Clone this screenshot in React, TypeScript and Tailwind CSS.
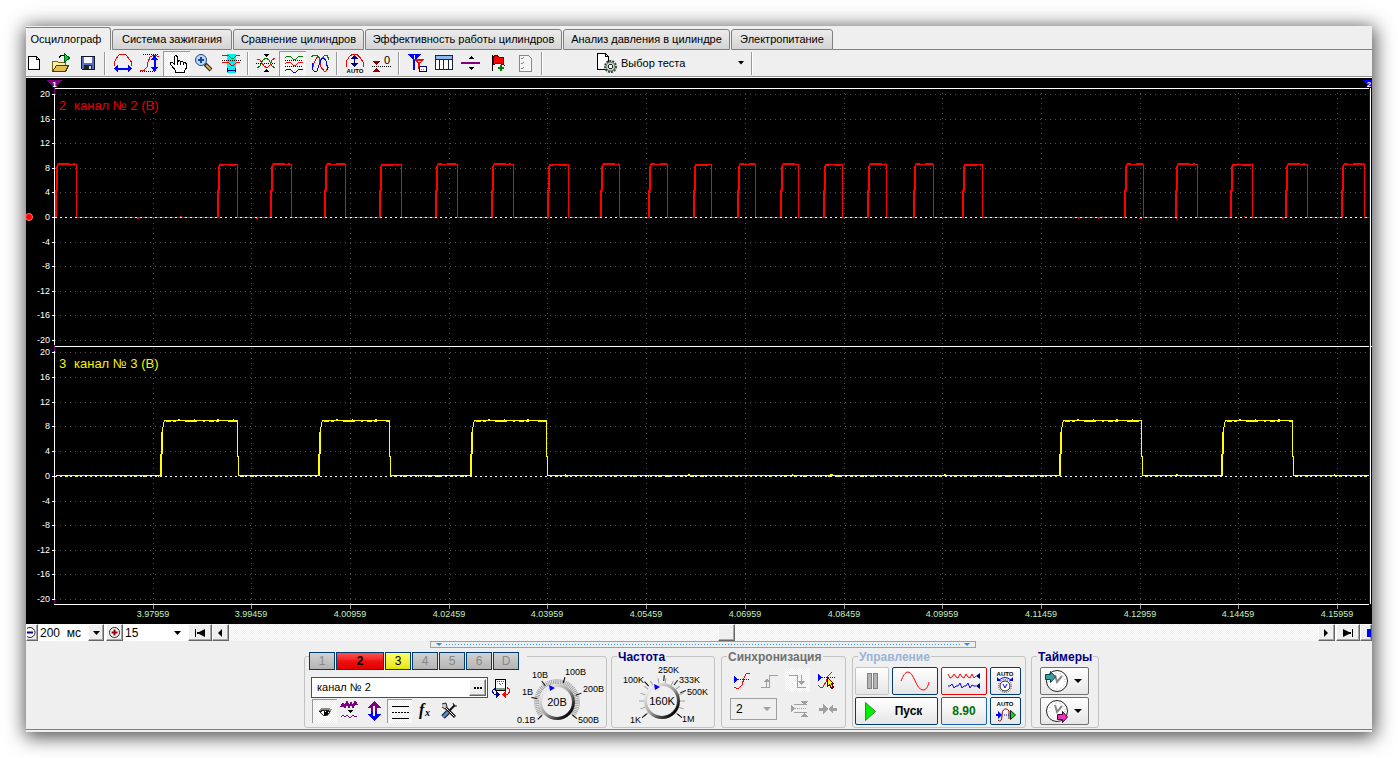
import type { ReactNode } from "react";
import clsx from "clsx";

const FONT = "font-['Liberation_Sans',Arial,sans-serif]";
const HATCH = "bg-[repeating-conic-gradient(#ffffff_0_25%,#efefef_0_50%)] bg-[length:2px_2px]";
const BEVEL = "bg-[#efefef] border border-t-white border-l-white border-r-[#666] border-b-[#666] shadow-[inset_-1px_-1px_0_#a8a8a8]";

const TABS = [
  { label: "Осциллограф", width: "w-[85px]" },
  { label: "Система зажигания", width: "w-[120px]" },
  { label: "Сравнение цилиндров", width: "w-[131px]" },
  { label: "Эффективность работы цилиндров", width: "w-[197px]" },
  { label: "Анализ давления в цилиндре", width: "w-[167px]" },
  { label: "Электропитание", width: "w-[102px]" },
];

/* ---------- Chart ---------- */

const LEVELS = [20, 16, 12, 8, 4, 0, -4, -8, -12, -16, -20];
const ROWS_A = [16, 41, 65, 90, 114, 139, 164, 188, 213, 237, 262];
const ROWS_B = [274, 299, 324, 348, 373, 398, 423, 447, 472, 496, 521];
const TIMES = [
  { x: 127, t: "3.97959" }, { x: 225, t: "3.99459" }, { x: 324, t: "4.00959" }, { x: 423, t: "4.02459" },
  { x: 521, t: "4.03959" }, { x: 620, t: "4.05459" }, { x: 719, t: "4.06959" }, { x: 818, t: "4.08459" },
  { x: 916, t: "4.09959" }, { x: 1015, t: "4.11459" }, { x: 1114, t: "4.12959" }, { x: 1212, t: "4.14459" },
  { x: 1311, t: "4.15959" },
];

const RED: [number, number][] = [
  [31, 50], [193, 211], [246, 265], [300, 319], [355, 375], [411, 431], [467, 487], [523, 542], [576, 593],
  [624, 641], [669, 685], [713, 729], [756, 772], [799, 816], [843, 860], [889, 907], [938, 956],
  [1100, 1117], [1151, 1171], [1206, 1226], [1261, 1281], [1317, 1338],
];
const YELLOW: [number, number][] = [[134, 211], [292, 363], [444, 520], [1033, 1115], [1195, 1266]];

const redPath = "M29.5 139.5" + RED.map(([a, b]) => `H${a - 0.5}V112.5H${a + 0.5}V86.5H${b + 0.5}V139.5`).join("") + "H1343";

const yellowPath = "M29.5 397.5" + YELLOW.map(([a, b]) =>
  `H${a + 0.5}V391L${a + 1.5} 375L${a + 2.5} 353L${a + 3.5} 346L${a + 4.5} 342.5H${b + 0.5}V378.5H${b + 1.5}V397.5`).join("") + "H1343";

function Scope() {
  return (
    <svg viewBox="0 0 1346 546" className={`block w-full bg-black ${FONT}`} shapeRendering="crispEdges" role="img" aria-label="Осциллограмма">
      {/* Grid */}
      <g stroke="#505050" strokeDasharray="1 4">
        {[...ROWS_A, ...ROWS_B].map((y) => <line key={y} x1="29" x2="1343" y1={y + 0.5} y2={y + 0.5} />)}
        {TIMES.map(({ x }) => <line key={x} x1={x + 0.5} x2={x + 0.5} y1="15" y2="526" />)}
      </g>

      {/* Signals */}
      <path d={redPath} fill="none" stroke="#f00" />
      {RED.map(([a, b], i) => (
        <g key={a} stroke="#f00">
          <path d={`M${a - 1} 139V112M${a} 112V88`} strokeWidth="2" />
          <path d={i % 3 === 1 ? `M${a + 1} 87.5H${b - 1}` : `M${a + 1} 85.5H${b}`} strokeDasharray={i % 2 ? "4 5 9 1" : "12 3 2 2"} />
        </g>
      ))}
      <path d={yellowPath} fill="none" stroke="#ff0" />
      {YELLOW.map(([a, b]) => (
        <g key={a} stroke="#ff0">
          <path d={`M${a + 1} 398V376M${a + 2} 376V354`} strokeWidth="2" />
          <path d={`M${a + 6} 343.5H${b}`} strokeDasharray="5 2 3 9 12 6 2 4" />
          <path d={`M${a + 18} 341.5H${b - 3}`} strokeDasharray="2 14 1 22" />
        </g>
      ))}
      <path d="M29 139.5H1343M29 398.5H1343" stroke="#fff" strokeDasharray="2 3" />
      <path d="M40 398.5H134M216 398.5H292M368 398.5H444M530 398.5H1033M1120 398.5H1195M1270 398.5H1343" stroke="#ff0" strokeDasharray="2 7 3 12 1 9" />
      <path d="M539 396.5h1M662 396.5h2M766 396.5h1M804 396.5h3M918 396.5h2M1150 396.5h2M1308 396.5h1" stroke="#ff0" />
      <path d="M111 140.5h2M154 138.5h2M230 140.5h2M285 140.5h1M1052 140.5h1M1072 140.5h1M1113 140.5h3M1150 140.5h1M1218 138.5h1M1256 140.5h1" stroke="#f00" />

      {/* Frame */}
      <path d="M28 10.5H1344M28.5 10V526M28 268.5H1346M28 526.5H1343M1344.5 10V526" stroke="#fff" fill="none" />
      <path d="M1343.5 9V526" stroke="#00f" />
      <path d="M28.5 8V16M28.5 267V273M28.5 521V526" stroke="#800080" />
      {[...ROWS_A, ...ROWS_B].map((y) => <line key={y} x1="26" x2="29" y1={y + 0.5} y2={y + 0.5} stroke="#fff" />)}
      {TIMES.map(({ x }) => <line key={x} x1={x + 0.5} x2={x + 0.5} y1="527" y2="531" stroke="#999" />)}

      {/* Cursors */}
      <path d="M21 2H36L28.5 10Z" fill="#800080" />
      <path d="M1336 2H1346V9H1343Z" fill="#00f" />
      <text x="28.5" y="9" fontSize="8" fontWeight="bold" fill="#fff" textAnchor="middle">1</text>
      <text x="1343" y="9" fontSize="8" fontWeight="bold" fill="#fff" textAnchor="middle">2</text>
      <circle cx="3" cy="139" r="3.5" fill="#f00" stroke="#f77" shapeRendering="geometricPrecision" />

      {/* Labels */}
      <g fontSize="9" fill="#fff" textAnchor="end">
        {LEVELS.map((v, i) => <text key={v} x="24" y={ROWS_A[i] + 3}>{v}</text>)}
        {LEVELS.map((v, i) => <text key={v} x="24" y={ROWS_B[i] + 3}>{v}</text>)}
      </g>
      <g fontSize="9" fill="#c4f0bc" textAnchor="middle">
        {TIMES.map(({ x, t }) => <text key={t} x={x} y="539">{t}</text>)}
      </g>
      <g fontSize="13">
        <text x="33" y="32" fill="#e80000">2</text>
        <text x="48" y="32" fill="#e80000">канал № 2 (В)</text>
        <text x="33" y="290" fill="#f4f400">3</text>
        <text x="48" y="290" fill="#f4f400">канал № 3 (В)</text>
      </g>
    </svg>
  );
}

/* ---------- Toolbar ---------- */

function Tool({ label, pressed, className = "w-[27px]", children }: { label: string; pressed?: boolean; className?: string; children: ReactNode }) {
  return (
    <button
      type="button"
      aria-label={label}
      className={clsx("h-[25px] shrink-0 overflow-hidden", className, pressed && `${HATCH} shadow-[inset_1px_1px_0_#999]`)}
    >
      <svg width="27" height="25" viewBox="0 0 27 25" fill="none" shapeRendering="crispEdges" className={`block ${FONT}`}>{children}</svg>
    </button>
  );
}

function Sep() {
  return <div className="flex w-2 shrink-0 justify-center"><div className="h-[23px] w-[2px] border-l border-r border-l-[#999] border-r-white" /></div>;
}

const WAVE_TOP = "M6 7L8 5H11L14 8H17L20 5H23L24 6";

function Toolbar() {
  return (
    <div className="flex h-[27px] items-center border-b border-[#909090]">
      <Tool label="Новый" className="w-[21px]">
        <path d="M2.5 5.5H10.5L13.5 8.5V18.5H2.5Z" fill="#fff" stroke="#000" />
        <path d="M10.5 5.5V8.5H13.5" stroke="#000" />
      </Tool>
      <Tool label="Открыть">
        <path d="M5.5 20.5V10.5H10.5L11.5 11.5H18.5V14.5" fill="#f7efa5" stroke="#7a6410" />
        <path d="M5.5 20.5L9.5 14.5H21.5L18.5 20.5Z" fill="#e2bf4e" stroke="#4a3c08" />
        <path d="M12 6.5L14 4.5H17" stroke="#000" />
        <path d="M17.5 2.5L22.5 7L17.5 11.5Z" fill="#00d030" stroke="#006018" />
      </Tool>
      <Tool label="Сохранить">
        <path d="M7.5 5.5H20.5V18.5H8.5L7.5 17.5Z" fill="#5a6cc0" stroke="#10142c" />
        <path d="M10 6H18V12H10Z" fill="#f4f6ff" />
        <path d="M10 14H18V18H10Z" fill="#222" />
        <path d="M15 15H17V18H15Z" fill="#ddd" />
      </Tool>
      <Sep />
      <Tool label="Масштаб по времени">
        <path d="M5.5 15V11L7.5 7L10.5 3.5H16.5L19.5 7L22.5 11V15" stroke="#f00" />
        <path d="M6 17.5H22" stroke="#00f" strokeWidth="2" />
        <path d="M5 17.5L9 13.5V21.5ZM23 17.5L19 13.5V21.5Z" fill="#00f" />
      </Tool>
      <Tool label="Масштаб по амплитуде">
        <path d="M7 3.5H22M4 20.5H18" stroke="#000" strokeDasharray="1 1" />
        <path d="M4 19.5H8L11 16L12 11L14 6L17 4.5H20L23 6" stroke="#f00" />
        <path d="M18.5 6V19" stroke="#00f" strokeWidth="2" />
        <path d="M18.5 4L22 9H15ZM18.5 21L22 16H15Z" fill="#00f" />
      </Tool>
      <Tool label="Рука" pressed>
        <path d="M12.5 21.5V19.5L10.5 17L7.5 13.5V11.5H9.5L11.5 13.5V5.5L12.5 4.5L14.5 5.5V10.5L16.5 9.5L17.5 11L19.5 10.5L20.5 12L22.5 11.5L23.5 13.5V17L21.5 19.5V21.5Z" fill="#fff" stroke="#000" />
        <path d="M14.5 10V14M17.5 11V14M20.5 12V14" stroke="#000" />
      </Tool>
      <Tool label="Лупа">
        <g shapeRendering="geometricPrecision">
          <path d="M15 13L21 19" stroke="#222" strokeWidth="4" />
          <path d="M16 14L20.5 18.500" stroke="#d8b048" strokeWidth="2" />
          <circle cx="11" cy="9" r="5.5" fill="#b9dcf5" stroke="#26438c" strokeWidth="1" />
        </g>
        <path d="M11 6V12M8 9H14" stroke="#1644a8" strokeWidth="2" />
      </Tool>
      <Tool label="Измерение">
        <path d="M10 3H19V22H10Z" fill="#00f0f0" />
        <path d="M5 5L8 4H11L14 7H17L20 4H23" stroke="#008000" />
        <path d="M5 9.5H24" stroke="#000" strokeDasharray="1 1" />
        <path d="M5 12L8 11H11L14 14H17L20 11H23" stroke="#f00" />
        <path d="M10.5 17V21M18.5 17V21M11 19.5H18" stroke="#000080" />
      </Tool>
      <Sep />
      <Tool label="Наложить сигналы">
        <path d="M4 12.5H23" stroke="#000" strokeDasharray="1 1" />
        <path d="M5 8L8 9L12 15L15 17L18 14L20 9L23 7" stroke="#f00" />
        <path d="M5 17L8 15L11 9L14 7L17 9L20 15L23 17" stroke="#008000" />
        <path d="M11 3H17L14 6ZM11 21H17L14 18Z" fill="#000" />
      </Tool>
      <Tool label="Развести сигналы" pressed>
        <path d={WAVE_TOP} stroke="#008000" />
        <path d="M6 9.5H24M6 15.5H24" stroke="#000" strokeDasharray="1 1" />
        <path d={WAVE_TOP} transform="translate(0 6)" stroke="#f00" />
        <path d={WAVE_TOP} transform="translate(0 13)" stroke="#00f" />
      </Tool>
      <Tool label="Совместить">
        <path d="M5 6L8 4H11L14 8H16L19 4H21L23 9" stroke="#008000" />
        <path d="M6 19L8 12L11 6L13 7L15 16L18 20H20L23 16" stroke="#f00" />
        <path d="M6 12V18L8 20H11L13 14L16 7H18L20 10L22 19" stroke="#00f" />
      </Tool>
      <Sep />
      <Tool label="Автомасштаб">
        <path d="M5.5 16V10L8.5 5.5L11 3.5H16L19.5 7L22.5 12V16" stroke="#f00" />
        <path d="M13.5 6V14" stroke="#000080" />
        <path d="M13.5 4L17 8H10ZM13.5 16L17 12H10Z" fill="#000080" />
        <text x="14" y="22" fontSize="6" fontWeight="bold" fill="#000" textAnchor="middle">AUTO</text>
      </Tool>
      <Tool label="Обнулить">
        <path d="M5 10H12L8.5 14ZM5 21H12L8.5 17Z" fill="#800000" />
        <path d="M4 15.5H23" stroke="#000" strokeDasharray="1 1" />
        <text x="16" y="13" fontSize="11" fill="#000">0</text>
      </Tool>
      <Sep />
      <Tool label="Маркеры">
        <path d="M5 3H18L12 9V19H10V9Z" fill="#00f" />
        <path d="M11 8H21L17 13V18H15V13Z" fill="#f00" />
        <path d="M11.5 4V8M15 10.5H18" stroke="#fff" />
        <rect x="16.5" y="15.5" width="7" height="5" fill="#fff" stroke="#000080" />
        <path d="M18 18.5H22" stroke="#808080" strokeDasharray="1 1" />
      </Tool>
      <Tool label="Таблица">
        <rect x="5.5" y="4.5" width="17" height="14" fill="#fff" stroke="#1a2440" />
        <path d="M6 5H22V8H6Z" fill="#8fb8f0" />
        <path d="M5 8.5H22M9.5 8V18M13.5 8V18M18.5 8V18" stroke="#1a2440" />
      </Tool>
      <Tool label="Разделитель">
        <path d="M4 12H23" stroke="#800080" strokeWidth="2" />
        <path d="M11 8H17L14 5ZM11 16H17L14 19Z" fill="#000" />
      </Tool>
      <Tool label="Добавить флаг">
        <path d="M8.5 4V20" stroke="#000" />
        <path d="M9 6L12 4L15 6H19L20 14L17 13L13 12L9 14Z" fill="#f00" stroke="#600" />
        <path d="M17 14V20M14 17H20" stroke="#008000" strokeWidth="2" />
      </Tool>
      <Tool label="Отчёт">
        <path d="M8.5 4.5H17.5L20.5 7.5V20.5H8.5Z" fill="#f4f4f4" stroke="#888" />
        <path d="M10 7L11 8L13 6M10 12L11 13L13 11M10 17L11 18L13 16" stroke="#888" />
      </Tool>
      <Sep />
      <button type="button" className="ml-11 flex h-[25px] w-[158px] items-center text-[11px]">
        <svg width="31" height="25" viewBox="0 0 31 25" fill="none" shapeRendering="crispEdges">
          <path d="M7.5 2.5H15.5L18.5 5.5V18.5H7.5Z" fill="#fff" stroke="#000" />
          <path d="M15.5 2.5V5.5H18.5" stroke="#000" />
          <g shapeRendering="geometricPrecision">
            <circle cx="20.5" cy="15.5" r="5.5" stroke="#38453a" strokeWidth="2" strokeDasharray="2 1" />
            <circle cx="20.5" cy="15.5" r="4.500" fill="#c2d4c4" stroke="#5c6c5e" />
          </g>
          <circle cx="20.5" cy="15.5" r="2" fill="#fff" stroke="#222" />
        </svg>
        Выбор теста
        <svg width="7" height="4" viewBox="0 0 7 4" className="mr-[3px] ml-auto"><path d="M0 0H6L3 3.5Z" fill="#000" /></svg>
      </button>
      <Sep />
    </div>
  );
}

/* ---------- Scroll row ---------- */

function NavButton({ label, className, children }: { label: string; className: string; children: ReactNode }) {
  return (
    <button type="button" aria-label={label} className={clsx("flex h-[17px] shrink-0 items-center justify-center overflow-hidden", BEVEL, className)}>
      {children}
    </button>
  );
}

function ScrollRow() {
  return (
    <div className="flex h-[17px] items-center bg-white">
      <NavButton label="Уменьшить" className="w-3 justify-end">
        <svg width="13" height="13" viewBox="0 0 13 13" className="shrink-0">
          <circle cx="6" cy="6.5" r="5" fill="#fff" stroke="#222" />
          <path d="M3 6.5H9" stroke="#000080" strokeWidth="2" />
        </svg>
      </NavButton>
      <div className="relative h-[17px] w-[66px]">
        <select aria-label="Развёртка" className="block h-[17px] w-full appearance-none bg-white pl-[2px] text-[12px] leading-[16px]">
          <option>200&nbsp; мс</option>
        </select>
        <span className={clsx("pointer-events-none absolute top-0 right-0 flex h-[17px] w-4 items-center justify-center", BEVEL)}>
          <svg width="7" height="4" viewBox="0 0 7 4"><path d="M0 0H7L3.5 4Z" /></svg>
        </span>
      </div>
      <NavButton label="Увеличить" className="ml-[2px] w-[17px]">
        <svg width="13" height="13" viewBox="0 0 13 13" className="shrink-0">
          <circle cx="6.5" cy="6.5" r="5" fill="#fff" stroke="#222" />
          <path d="M3.5 6.5H9.5M6.5 3.5V9.5" stroke="#900" strokeWidth="2" />
        </svg>
      </NavButton>
      <div className="relative h-[17px] w-[64px]">
        <select aria-label="Масштаб" className="block h-[17px] w-full appearance-none bg-white pl-[2px] text-[12px] leading-[16px]">
          <option>15</option>
        </select>
        <svg width="7" height="4" viewBox="0 0 7 4" className="pointer-events-none absolute top-[7px] right-[6px]"><path d="M0 0H7L3.5 4Z" /></svg>
      </div>
      <NavButton label="В начало" className="ml-px w-6">
        <svg width="10" height="8" viewBox="0 0 10 8"><path d="M0 0H1V8H0ZM2 3H4L10 0V8L4 5H2Z" /></svg>
      </NavButton>
      <NavButton label="Назад" className="w-[17px]">
        <svg width="5" height="8" viewBox="0 0 5 8"><path d="M0 4L4 0V8Z" /></svg>
      </NavButton>
      <div className={clsx("flex h-[17px] flex-1 items-center", HATCH)}>
        <div className="flex-[489]" />
        <button type="button" aria-label="Позиция" className={clsx("h-[17px] w-[17px]", BEVEL)} />
        <div className="flex-[584]" />
      </div>
      <NavButton label="Вперёд" className="w-[17px]">
        <svg width="5" height="8" viewBox="0 0 5 8"><path d="M4 4L0 0V8Z" /></svg>
      </NavButton>
      <NavButton label="В конец" className="ml-px w-6">
        <svg width="10" height="8" viewBox="0 0 10 8"><path d="M9 0H10V8H9ZM8 3H6L0 0V8L6 5H8Z" /></svg>
      </NavButton>
      <NavButton label="Автопрокрутка" className="w-3 border-l-[#8ab4d8]">
        <svg width="10" height="8" viewBox="0 0 10 8" className="shrink-0"><path d="M6 0H10V8H6Z" fill="#00f" /></svg>
      </NavButton>
    </div>
  );
}

/* ---------- Bottom panel ---------- */

function Group({ title, titleClass, className, children }: { title: string; titleClass?: string; className: string; children: ReactNode }) {
  return (
    <section aria-label={title} className={clsx("h-[72px] shrink-0 rounded-[3px] border border-[#c3c3c3]", className)}>
      {titleClass && <h2 className={clsx("-mt-[6px] ml-[5px] h-3 w-fit bg-[#efefef] px-px text-[12px] leading-3 font-bold", titleClass)}>{title}</h2>}
      {children}
    </section>
  );
}

const OFF = "w-[26px] text-[#888] bg-linear-to-b from-[#d2d2d2] to-[#b4b4b4]";
const CHANNELS = [
  { name: "1", cls: OFF },
  { name: "2", cls: "w-[48px] font-bold text-black bg-linear-to-b from-[#ff5050] via-[#f01010] to-[#e00000]" },
  { name: "3", cls: "w-[26px] text-black bg-linear-to-b from-[#ffff60] to-[#e6e600]" },
  { name: "4", cls: OFF },
  { name: "5", cls: OFF },
  { name: "6", cls: OFF },
  { name: "D", cls: OFF },
];

function IconButton({ label, pressed, className, children }: { label: string; pressed?: boolean; className?: string; children: ReactNode }) {
  return (
    <button type="button" aria-label={label} className={clsx("h-[24px] w-[25px]", pressed && `${HATCH} shadow-[inset_1px_1px_0_#999]`, className)}>
      <svg width="25" height="24" viewBox="0 0 25 24" fill="none" shapeRendering="crispEdges" className="block">{children}</svg>
    </button>
  );
}

interface KnobProps {
  label: string;
  value: string;
  cx: number;
  cy: number;
  step: number;
  width: number;
  majors: number[];
  marks: { x: number; y: number; t: string }[];
}

function Knob({ label, value, cx, cy, step, width, majors, marks }: KnobProps) {
  const ticks: number[] = [];
  for (let a = -130; a <= 130; a += step) ticks.push(a);
  const id = `knob-${width}`;
  return (
    <svg width={width} height="70" viewBox={`0 0 ${width} 70`} role="slider" aria-label={label} aria-valuenow={parseInt(value)} aria-valuetext={value} className={`block shrink-0 ${FONT}`}>
      <defs>
        <linearGradient id={id} x1="0" y1="0" x2="1" y2="1">
          <stop offset="0.1" stopColor="#fafafa" />
          <stop offset="0.5" stopColor="#a0a0a0" />
          <stop offset="0.85" stopColor="#000" />
        </linearGradient>
      </defs>
      {ticks.map((a) => <path key={a} d="M0 -18V-23" transform={`translate(${cx} ${cy}) rotate(${a})`} stroke="#a0a0a0" />)}
      {majors.map((a) => <path key={a} d="M0 -20V-26" transform={`translate(${cx} ${cy}) rotate(${a})`} stroke="#000" />)}
      <circle cx={cx} cy={cy} r="18" fill={`url(#${id})`} />
      <circle cx={cx} cy={cy} r="15" fill="#efefef" />
      <path d={`M${cx - 8} ${cy - 17}L${cx - 2} ${cy - 14}L${cx - 7} ${cy - 11}Z`} fill="#00f" />
      <text x={cx} y={cy + 4} fontSize="11" textAnchor="middle">{value}</text>
      <g fontSize="9">
        {marks.map((m) => <text key={m.t} x={m.x} y={m.y}>{m.t}</text>)}
      </g>
    </svg>
  );
}

function ChannelGroup() {
  return (
    <Group title="Канал" className="flex w-[303px]">
      <div className="w-[210px]">
        <div className="-mt-[5px] ml-1 flex w-[218px] gap-px bg-[#efefef]">
          {CHANNELS.map((c) => (
            <button key={c.name} type="button" className={clsx("h-[18px] border border-[#003c74] text-[12px] leading-4", c.cls)}>{c.name}</button>
          ))}
        </div>
        <div className="mt-[7px] ml-[6px] flex items-center">
          <div className="flex h-[21px] w-[177px] items-center border border-[#e01010] bg-white pr-px">
            <input aria-label="Имя канала" defaultValue="канал № 2" className="min-w-0 flex-1 pl-[5px] text-[11px] outline-none" />
            <button type="button" aria-label="Выбрать" className={clsx("flex h-[17px] w-[17px] items-center justify-center", BEVEL)}>
              <svg width="8" height="2" viewBox="0 0 8 2"><path d="M0 0H2V2H0ZM3 0H5V2H3ZM6 0H8V2H6Z" /></svg>
            </button>
          </div>
          <button type="button" aria-label="Поменять датчик" className="ml-[3px]">
            <svg width="20" height="20" viewBox="0 0 20 20" fill="none" shapeRendering="crispEdges" className="block">
              <rect x="4.5" y="1.5" width="10" height="11" fill="#fff" stroke="#000" />
              <path d="M5 10H14V12H5Z" fill="#7aa07a" />
              <path d="M6 3.5H13M8 5L10 7L12 5" stroke="#555" strokeDasharray="1 1" />
              <path d="M4 10.5L1.5 12.5V14L3.5 16.5H6" stroke="#000080" />
              <path d="M5 13L9 16.5L5 20Z" fill="#000080" />
              <path d="M16 9.5L18.5 11.5V14L16.5 16.5H14" stroke="#f00" />
              <path d="M15 13L11 16.5L15 20Z" fill="#f00" />
            </svg>
          </button>
        </div>
        <div className="mt-px ml-[7px] flex">
          <IconButton label="Показать" pressed>
            <path d="M7 11L10 9H17L19 11L18 15L15 17H11L8 14Z" fill="#8a8a80" />
            <path d="M8 12.500L11 11.500H16L18 13L15 16H11Z" fill="#fff" stroke="#222" />
            <path d="M12 12H16V16H12Z" fill="#000" />
            <path d="M13 12.5H14" stroke="#fff" />
            <path d="M17 10.5H20" stroke="#b0a040" />
          </IconButton>
          <IconButton label="Инвертировать">
            <path d="M4 8L6 5L8 8L10 3L12 8L14 4L16 8L18 3L20 6" stroke="#800080" strokeWidth="2" />
            <path d="M10 11H16L13 14Z" fill="#000" />
            <path d="M4 18L6 16L8 18L10 16L13 19L16 16L18 18L20 17" stroke="#800080" />
          </IconButton>
          <IconButton label="Смещение">
            <path d="M12 2L19 9H15V12H9V9H5Z" fill="#800080" />
            <path d="M12 22L19 15H15V12H9V15H5Z" fill="#00f" />
            <path d="M12 7V17" stroke="#efefef" strokeWidth="2" />
          </IconButton>
          <IconButton label="Фильтр" pressed>
            <path d="M5 7.5H22M5 19.5H22" stroke="#000" />
            <path d="M5 13.5H22" stroke="#000" strokeDasharray="2 1" />
          </IconButton>
          <IconButton label="Функция">
            <g className="font-['Liberation_Serif',serif]" fill="#000" fontWeight="bold" fontStyle="italic">
              <text x="7" y="16" fontSize="16">f</text>
              <text x="13" y="17" fontSize="10">x</text>
            </g>
          </IconButton>
          <IconButton label="Настройки">
            <g shapeRendering="geometricPrecision">
              <path d="M8 8L18 18" stroke="#111" strokeWidth="3" />
              <path d="M8 8L17.500 17.500" stroke="#fff" />
              <path d="M5 5L9 4L10 8L8 10L5 8" fill="#ccc" stroke="#222" />
              <path d="M18 6L12 12" stroke="#111" strokeWidth="2" />
              <path d="M11 13L6 18" stroke="#111" strokeWidth="5" />
              <path d="M11 13L6 18" stroke="#5c86c8" strokeWidth="3" />
              <path d="M16 4L17 7L20 7" stroke="#222" />
            </g>
          </IconButton>
        </div>
      </div>
      <Knob
        label="Диапазон" value="20В" cx={42} cy={45} step={5} width={91} majors={[-132, -80, -36, 18, 70, 130]}
        marks={[
          { x: 2, y: 66, t: "0.1В" }, { x: 7, y: 38, t: "1В" }, { x: 17, y: 21, t: "10В" },
          { x: 50, y: 18, t: "100В" }, { x: 68, y: 35, t: "200В" }, { x: 63, y: 66, t: "500В" },
        ]}
      />
    </Group>
  );
}

function SyncGroup() {
  return (
    <Group title="Синхронизация" titleClass="text-[#707070]" className="w-[125px]">
      <div className="mt-[5px] ml-[7px] flex gap-[3px]">
        <IconButton label="Уровень">
          <path d="M5 7V16L9 11.500Z" fill="#00f" />
          <path d="M9 11.500H21" stroke="#00f" strokeDasharray="1 1" />
          <path d="M5 19L7 20H10L13 17L15 10L17 6L21 5" stroke="#f00" />
        </IconButton>
        <IconButton label="По фронту">
          <path d="M4 19.500H12.500V7.500H21" stroke="#a0a0a0" />
          <path d="M9.500 11V19" stroke="#a0a0a0" />
          <path d="M7 14H13L10 10Z" fill="#a0a0a0" />
        </IconButton>
        <IconButton label="По спаду" className={HATCH}>
          <path d="M4 7.500H12.500V19.500H21M16.500 7V16" stroke="#a0a0a0" />
          <path d="M13 13H20L16.500 17Z" fill="#a0a0a0" />
        </IconButton>
        <IconButton label="Указать уровень">
          <path d="M5 5V14L9 9.500Z" fill="#00f" />
          <path d="M9 9.500H23" stroke="#00f" strokeDasharray="1 1" />
          <path d="M5 17L7 19H10L13 14L15 8L19 4" stroke="#f00" />
          <path d="M14.500 9.500L20.500 15.500H18.500L20.500 19.500L18.500 20.500L16.500 16.500L14.500 18.500Z" fill="#ff0" stroke="#600" />
        </IconButton>
      </div>
      <div className="mt-[5px] ml-2 flex items-center">
        <div className="relative">
          <select aria-label="Канал синхронизации" className="block h-[22px] w-[47px] appearance-none border border-[#a0a0a0] pl-[5px] text-[12px]">
            <option>2</option>
          </select>
          <svg width="8" height="4" viewBox="0 0 8 4" className="pointer-events-none absolute top-[9px] right-[6px]"><path d="M0 0H8L4 4Z" fill="#a0a0a0" /></svg>
        </div>
        <div className="ml-[10px] flex gap-[3px]">
          <IconButton label="Гистерезис">
            <path d="M4 8V15L8 11.500Z" fill="#a0a0a0" />
            <path d="M8 11.500H20" stroke="#a0a0a0" strokeDasharray="1 1" />
            <path d="M7 7.500H20M7 15.500H20" stroke="#a0a0a0" />
            <path d="M14 4H21L17.500 8ZM14 20H21L17.500 16Z" fill="#a0a0a0" />
          </IconButton>
          <IconButton label="Сжать">
            <path d="M4 12H9M17 12H22" stroke="#a0a0a0" strokeWidth="3" />
            <path d="M8 7L13 12L8 17ZM18 7L13 12L18 17Z" fill="#a0a0a0" />
          </IconButton>
        </div>
      </div>
    </Group>
  );
}

const CMD = "flex h-[28px] items-center justify-center rounded-[2px] border bg-linear-to-b from-white to-[#e6e6e6]";

function AutoIcon({ children }: { children: ReactNode }) {
  return (
    <svg width="27" height="25" viewBox="0 0 27 25" fill="none" className={FONT}>
      <text x="13" y="7" fontSize="6" fontWeight="bold" fill="#000" textAnchor="middle">AUTO</text>
      {children}
    </svg>
  );
}

function ControlGroup() {
  return (
    <Group title="Управление" titleClass="text-[#9ab4d4]" className="w-[174px]">
      <div className="mt-1 ml-[2px] grid w-fit grid-cols-[34px_46px_46px_31px] gap-x-[3px] gap-y-[2px]">
        <button type="button" aria-label="Пауза" disabled className={clsx(CMD, "border-[#c4c4c4]")}>
          <svg width="11" height="16" viewBox="0 0 11 16" shapeRendering="crispEdges"><path d="M0.500 0.500H4.500V15.500H0.500ZM6.500 0.500H10.500V15.500H6.500Z" fill="#b4b4b4" stroke="#808080" /></svg>
        </button>
        <button type="button" aria-label="Осциллограмма" className={clsx(CMD, "border-[#003c74]")}>
          <svg width="30" height="20" viewBox="0 0 30 20" fill="none"><path d="M1 10C3 5 5 1 8 1C14 1 16 19 23 19C26 19 28 16 29 11" stroke="#f00" /></svg>
        </button>
        <button type="button" aria-label="Несколько каналов" className={clsx(CMD, "border-[#f00000]")}>
          <svg width="34" height="20" viewBox="0 0 34 20" fill="none">
            <path d="M1 3L3 7L5 6L7 3L9 6L11 7L13 3L15 6L17 7L19 3L21 6L23 7L25 3L27 7L29 5" stroke="#f00" />
            <path d="M1 15H3L5 13L7 17L9 15H11L13 12L15 17L17 15H19L21 12L23 17L25 14L27 15H29" stroke="#00f" />
            <path d="M33 2V8L29 5ZM33 12V18L29 15Z" fill="#000080" />
          </svg>
        </button>
        <button type="button" aria-label="Автодиапазон" className={clsx(CMD, "border-[#003c74]")}>
          <AutoIcon>
            <path d="M7 11Q13 6 19 11" stroke="#00f" />
            <path d="M5 8V12H9ZM21 8V12H17Z" fill="#00f" />
            <circle cx="13" cy="17" r="6.500" stroke="#555" strokeDasharray="1 1" />
            <circle cx="13" cy="17" r="5" fill="#fff" stroke="#222" />
            <path d="M11 15L13 19L15 15" stroke="#00f" />
          </AutoIcon>
        </button>
        <button type="button" className={clsx(CMD, "relative col-span-2 border-[#003c74] pl-6 text-[12px] font-bold")}>
          <svg width="11" height="19" viewBox="0 0 11 19" className="absolute left-[9px]"><path d="M0.500 0.500L10.500 9.500L0.500 18.500Z" fill="#00f000" stroke="#408040" /></svg>
          Пуск
        </button>
        <button type="button" className={clsx(CMD, "border-[#1864b0] text-[12px] font-bold text-[#007000]")}>8.90</button>
        <button type="button" aria-label="Автосинхронизация" className={clsx(CMD, "border-[#003c74]")}>
          <AutoIcon>
            <path d="M4 16H7" stroke="#00f" strokeWidth="2" />
            <path d="M6 12V20L10 16Z" fill="#00f" />
            <path d="M6 21C9 24 10 20 10 16C10 10 14 8 17 12V20" stroke="#800000" />
            <path d="M12 16H18" stroke="#00f" strokeDasharray="1 1" />
            <path d="M18.500 11.500V20.500L23.500 16Z" fill="#00e020" stroke="#003010" />
          </AutoIcon>
        </button>
      </div>
    </Group>
  );
}

function Clock({ arrow }: { arrow: ReactNode }) {
  return (
    <svg width="26" height="25" viewBox="0 0 26 25" fill="none">
      <circle cx="14" cy="12" r="10.500" fill="#fff" stroke="#222" />
      <circle cx="14" cy="12" r="8" stroke="#aaa" strokeDasharray="1 3" />
      <path d="M12 6L14 13L19 7" stroke="#888" strokeWidth="2" />
      {arrow}
    </svg>
  );
}

function TimersGroup() {
  return (
    <Group title="Таймеры" titleClass="text-[#000080]" className="w-[68px]">
      <div className="mt-1 ml-2 flex w-[49px] flex-col gap-[2px]">
        <button type="button" aria-label="Таймер запуска" className={clsx(CMD, "gap-[5px] border-[#707070] pr-1")}>
          <Clock arrow={<path d="M2.500 5.500H7.500V2.500L12.500 8L7.500 13.500V10.500H2.500Z" fill="#3aa0a0" stroke="#104040" />} />
          <svg width="8" height="4" viewBox="0 0 8 4"><path d="M0 0H8L4 4Z" /></svg>
        </button>
        <button type="button" aria-label="Таймер остановки" className={clsx(CMD, "gap-[5px] border-[#707070] pr-1")}>
          <Clock arrow={<path d="M14.500 15.500H19.500V12.500L24.500 18L19.500 23.500V20.500H14.500Z" fill="#f030c0" stroke="#400030" />} />
          <svg width="8" height="4" viewBox="0 0 8 4"><path d="M0 0H8L4 4Z" /></svg>
        </button>
      </div>
    </Group>
  );
}

export default function App() {
  return (
    <div className={`bg-white p-[26px] text-black ${FONT}`}>
      <main className="overflow-hidden bg-[#efefef] shadow-[1px_3px_18px_2px_rgba(0,0,0,0.7)]">
        {/* Tabs */}
        <div role="tablist" className="flex h-6 items-end gap-px">
          {TABS.map((tab, i) => (
            <button
              key={tab.label}
              type="button"
              role="tab"
              aria-selected={i === 0}
              className={clsx(
                "shrink-0 border-[#808080] text-[11px] whitespace-nowrap",
                tab.width,
                i === 0
                  ? "h-[23px] rounded-tr-[3px] border-t border-r pr-1"
                  : "h-[21px] rounded-t-[3px] border bg-linear-to-b from-[#ececec] to-[#d4d4d4]"
              )}
            >
              {tab.label}
            </button>
          ))}
          <div className="-ml-px h-px flex-1 bg-[#808080]" />
        </div>

        <Toolbar />
        <div className="h-px bg-white" />
        <Scope />
        <ScrollRow />

        {/* Splitter */}
        <div className="flex justify-center pl-2">
          <div className="flex h-[7px] w-[546px] items-center gap-1 border border-[#a0a0a0] px-[5px]">
            <svg width="6" height="3" viewBox="0 0 6 3"><path d="M0 0H6L3 3Z" fill="#2a8cf0" /></svg>
            <div className="h-px flex-1 bg-[repeating-linear-gradient(90deg,#3898f8_0_1px,transparent_1px_3px)]" />
            <svg width="6" height="3" viewBox="0 0 6 3"><path d="M0 0H6L3 3Z" fill="#2a8cf0" /></svg>
          </div>
        </div>

        <div className="flex justify-center border-b border-[#808080] pt-2 pb-px pl-[5px]">
          <ChannelGroup />
          <div className="w-1" />
          <Group title="Частота" titleClass="text-[#000080]" className="w-[104px]">
            <div className="-mt-[6px]">
              <Knob
                label="Частота" value="160K" cx={50} cy={44} step={20} width={102} majors={[-130, -42, 5, 37, 66, 130]}
                marks={[
                  { x: 18, y: 66, t: "1K" }, { x: 11, y: 26, t: "100K" }, { x: 46, y: 16, t: "250K" },
                  { x: 67, y: 26, t: "333K" }, { x: 75, y: 38, t: "500K" }, { x: 70, y: 65, t: "1M" },
                ]}
              />
            </div>
          </Group>
          <div className="w-[6px]" />
          <SyncGroup />
          <div className="w-[6px]" />
          <ControlGroup />
          <div className="w-[5px]" />
          <TimersGroup />
        </div>
        <div className="h-[2px]" />
      </main>
    </div>
  );
}
